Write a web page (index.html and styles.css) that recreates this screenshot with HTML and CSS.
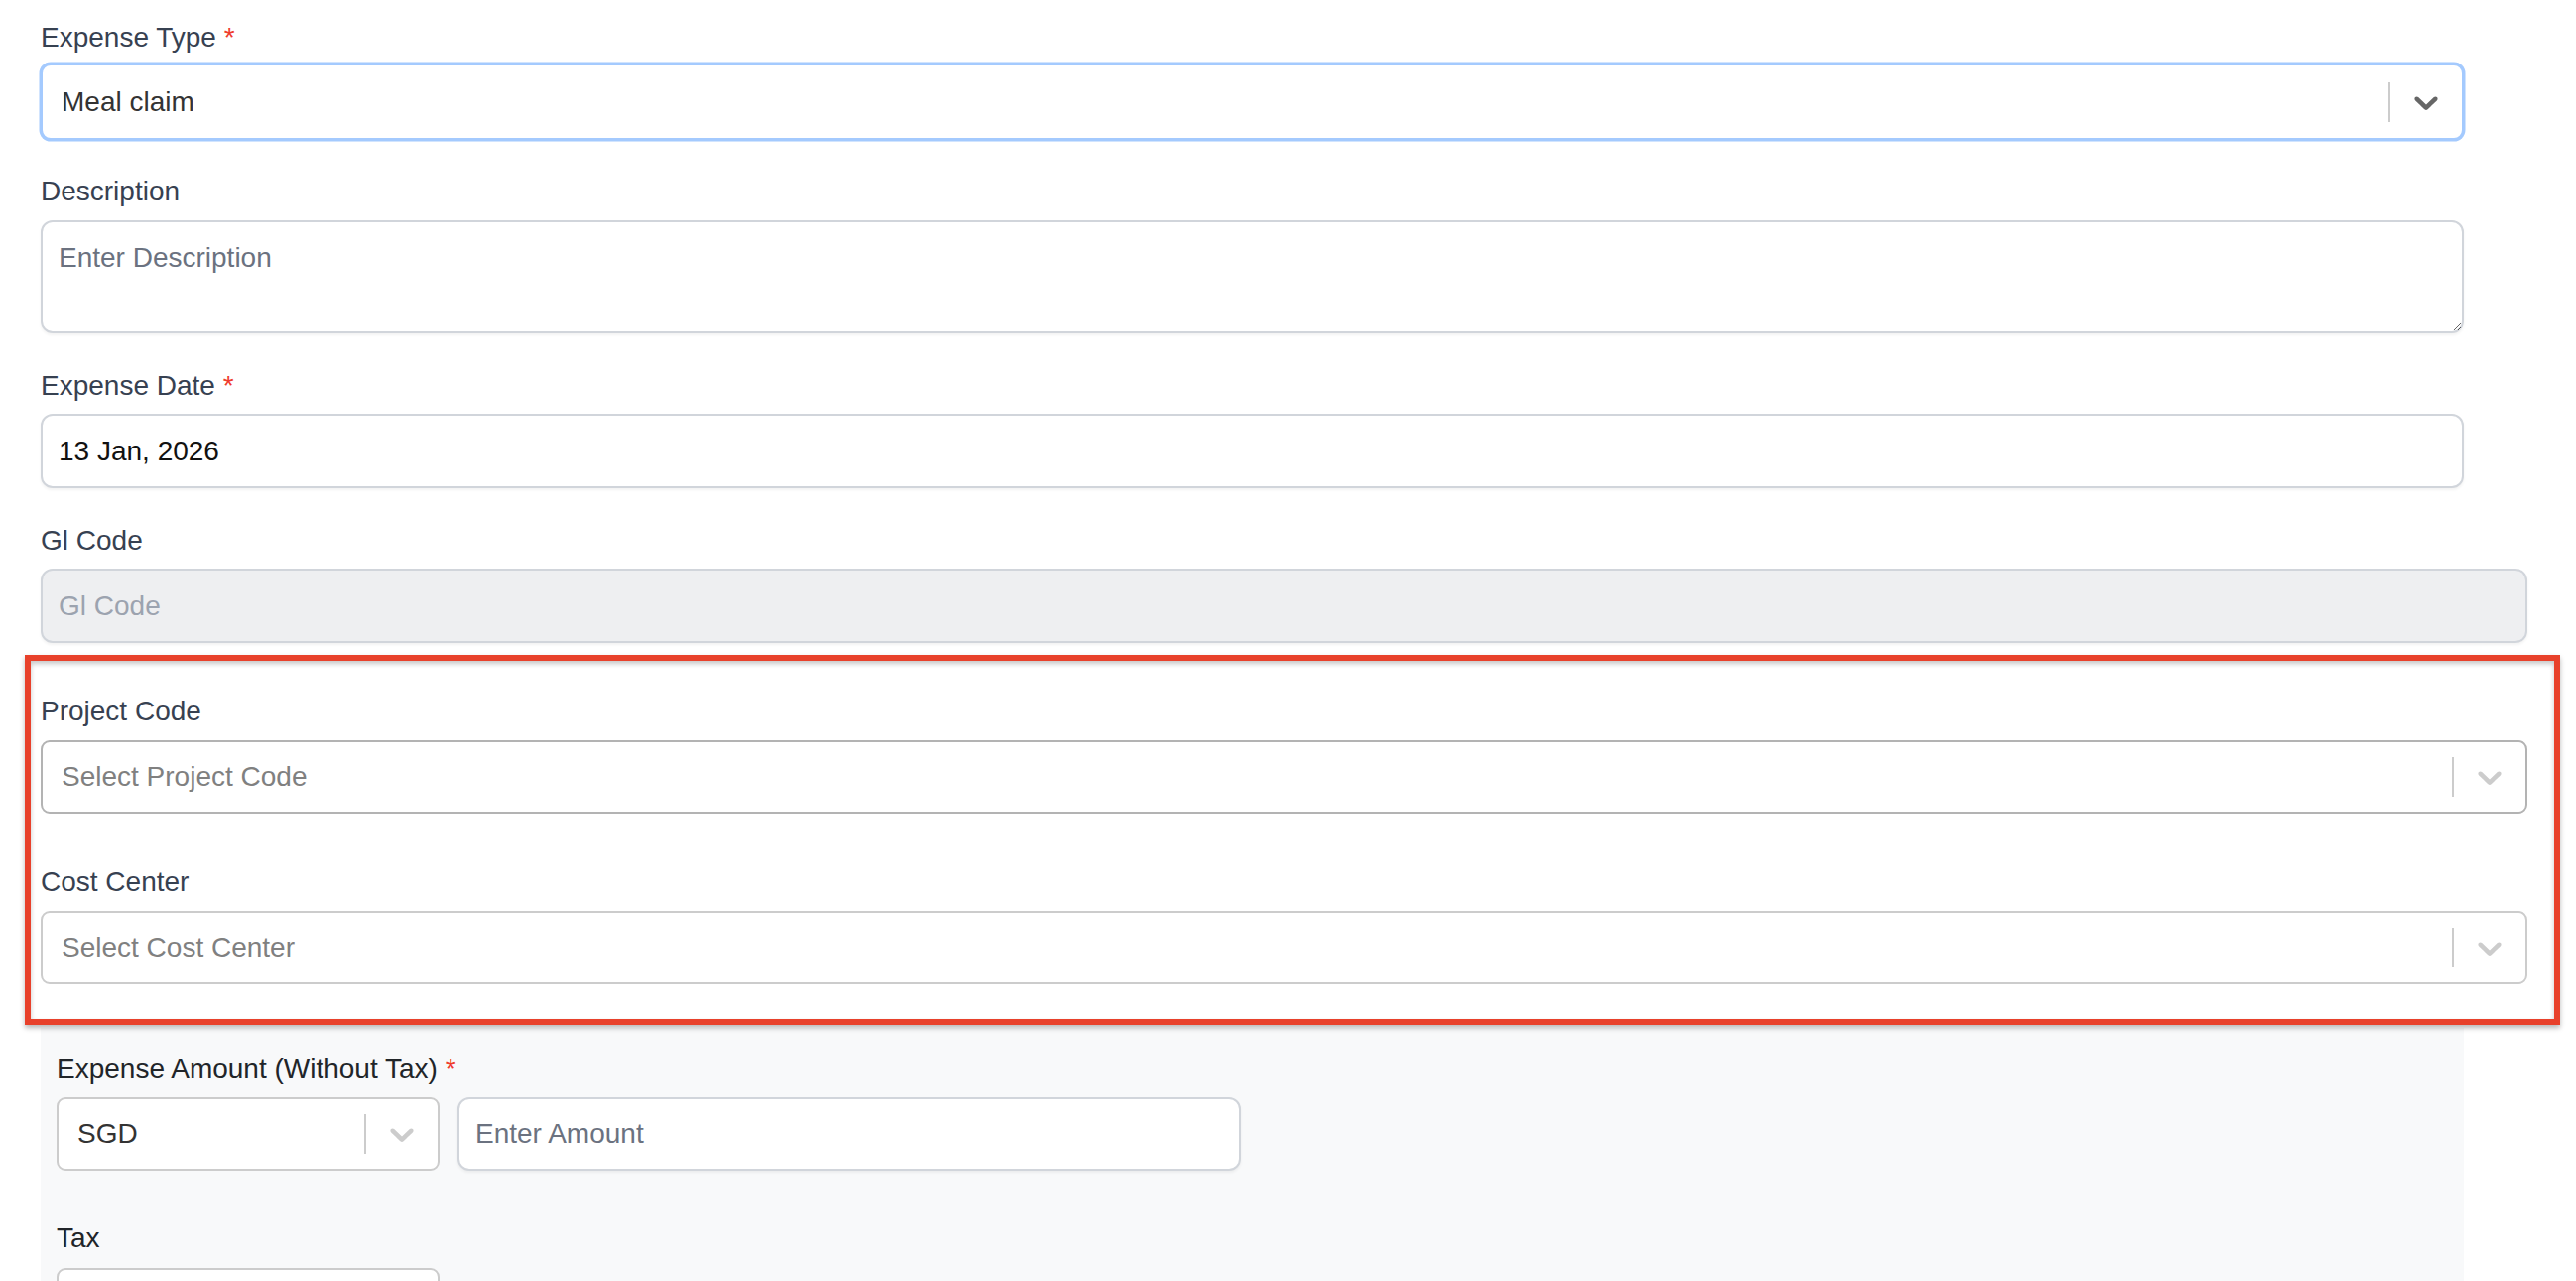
FILE: index.html
```html
<!DOCTYPE html>
<html lang="en">
<head>
<meta charset="utf-8">
<title>Expense form</title>
<link rel="stylesheet" href="styles.css">
</head>
<body>
<div class="page">

  <div class="field field--g1">
    <label class="label label--tight">Expense Type <span class="req">*</span></label>
    <div class="select select--focused w-narrow">
      <div class="select__value select__value--filled">Meal claim</div>
      <span class="select__sep"></span>
      <span class="select__ind select__ind--dark">
        <svg viewBox="0 0 20 20" width="40" height="40" aria-hidden="true"><path d="M4.516 7.548c0.436-0.446 1.043-0.481 1.576 0l3.908 3.747 3.908-3.747c0.533-0.481 1.141-0.446 1.574 0 0.436 0.445 0.408 1.197 0 1.615-0.406 0.418-4.695 4.502-4.695 4.502-0.217 0.223-0.502 0.335-0.787 0.335s-0.57-0.112-0.789-0.335c0 0-4.287-4.084-4.695-4.502s-0.436-1.17 0-1.615z"/></svg>
      </span>
    </div>
  </div>

  <div class="field field--g2">
    <label class="label label--m9">Description</label>
    <textarea class="textarea w-narrow" placeholder="Enter Description"></textarea>
  </div>

  <div class="field field--g3">
    <label class="label label--m8">Expense Date <span class="req">*</span></label>
    <input class="input w-narrow" type="text" value="13 Jan, 2026">
  </div>

  <div class="field field--g4">
    <label class="label label--m8">Gl Code</label>
    <input class="input input--disabled w-wide" type="text" placeholder="Gl Code" disabled>
  </div>

  <div class="highlight w-wide">
    <div class="field field--g5">
      <label class="label label--m9">Project Code</label>
      <div class="select select--hover w-wide">
        <div class="select__value">Select Project Code</div>
        <span class="select__sep"></span>
        <span class="select__ind">
          <svg viewBox="0 0 20 20" width="40" height="40" aria-hidden="true"><path d="M4.516 7.548c0.436-0.446 1.043-0.481 1.576 0l3.908 3.747 3.908-3.747c0.533-0.481 1.141-0.446 1.574 0 0.436 0.445 0.408 1.197 0 1.615-0.406 0.418-4.695 4.502-4.695 4.502-0.217 0.223-0.502 0.335-0.787 0.335s-0.57-0.112-0.789-0.335c0 0-4.287-4.084-4.695-4.502s-0.436-1.17 0-1.615z"/></svg>
        </span>
      </div>
    </div>

    <div class="field">
      <label class="label label--m9">Cost Center</label>
      <div class="select w-wide">
        <div class="select__value">Select Cost Center</div>
        <span class="select__sep"></span>
        <span class="select__ind">
          <svg viewBox="0 0 20 20" width="40" height="40" aria-hidden="true"><path d="M4.516 7.548c0.436-0.446 1.043-0.481 1.576 0l3.908 3.747 3.908-3.747c0.533-0.481 1.141-0.446 1.574 0 0.436 0.445 0.408 1.197 0 1.615-0.406 0.418-4.695 4.502-4.695 4.502-0.217 0.223-0.502 0.335-0.787 0.335s-0.57-0.112-0.789-0.335c0 0-4.287-4.084-4.695-4.502s-0.436-1.17 0-1.615z"/></svg>
        </span>
      </div>
    </div>
  </div>

  <div class="panel w-narrow">
    <div class="field field--g7">
      <label class="label label--dark label--m9">Expense Amount (Without Tax) <span class="req">*</span></label>
      <div class="amount-row">
        <div class="select select--small">
          <div class="select__value select__value--filled">SGD</div>
          <span class="select__sep"></span>
          <span class="select__ind">
            <svg viewBox="0 0 20 20" width="40" height="40" aria-hidden="true"><path d="M4.516 7.548c0.436-0.446 1.043-0.481 1.576 0l3.908 3.747 3.908-3.747c0.533-0.481 1.141-0.446 1.574 0 0.436 0.445 0.408 1.197 0 1.615-0.406 0.418-4.695 4.502-4.695 4.502-0.217 0.223-0.502 0.335-0.787 0.335s-0.57-0.112-0.789-0.335c0 0-4.287-4.084-4.695-4.502s-0.436-1.17 0-1.615z"/></svg>
          </span>
        </div>
        <input class="input input--amount" type="text" placeholder="Enter Amount">
      </div>
    </div>

    <div class="field">
      <label class="label label--dark label--m10">Tax</label>
      <div class="select select--small">
        <div class="select__value"></div>
        <span class="select__sep"></span>
        <span class="select__ind">
          <svg viewBox="0 0 20 20" width="40" height="40" aria-hidden="true"><path d="M4.516 7.548c0.436-0.446 1.043-0.481 1.576 0l3.908 3.747 3.908-3.747c0.533-0.481 1.141-0.446 1.574 0 0.436 0.445 0.408 1.197 0 1.615-0.406 0.418-4.695 4.502-4.695 4.502-0.217 0.223-0.502 0.335-0.787 0.335s-0.57-0.112-0.789-0.335c0 0-4.287-4.084-4.695-4.502s-0.436-1.17 0-1.615z"/></svg>
        </span>
      </div>
    </div>
  </div>

</div>
</body>
</html>
```

FILE: styles.css
```css
html, body {
  margin: 0;
  padding: 0;
  background: #ffffff;
  overflow: hidden;
}

body {
  font-family: "Liberation Sans", Arial, Helvetica, sans-serif;
  font-size: 28px;
  color: #374151;
}

.page {
  padding: 18px 0 0 41px;
}

.w-narrow { width: 2442px; }
.w-wide { width: 2506px; }

.field { display: block; }
.field--g1 { margin-bottom: 32px; }
.field--g2 { margin-bottom: 33px; }
.field--g3 { margin-bottom: 33px; }
.field--g4 { margin-bottom: 49px; }
.field--g5 { margin-bottom: 49px; }
.field--g7 { margin-bottom: 48px; }

.label {
  display: block;
  line-height: 40px;
  height: 40px;
  color: #374151;
  white-space: nowrap;
}
.label--tight { margin-bottom: 6px; }
.label--m8 { margin-bottom: 8px; }
.label--m9 { margin-bottom: 9px; }
.label--m10 { margin-bottom: 10px; }
.label--dark { color: #212529; }

.req { color: #ef3b2c; }

/* react-select like control */
.select {
  box-sizing: border-box;
  display: flex;
  align-items: center;
  height: 74px;
  background: #ffffff;
  border: 2px solid #cccccc;
  border-radius: 9px;
}
.select--focused {
  height: 77px;
  border-color: #a4cafe;
  box-shadow: 0 0 0 1.5px #a4cafe;
  border-radius: 10px;
}
.select--hover { border-color: #b3b3b3; }
.select--small { width: 386px; }

.select__value {
  flex: 1;
  padding-left: 19px;
  color: #808080;
  white-space: nowrap;
  overflow: hidden;
}
.select__value--filled { color: #333333; }

.select__sep {
  width: 2px;
  height: 40px;
  background: #cccccc;
  flex: none;
}

.select__ind {
  width: 72px;
  height: 40px;
  display: flex;
  align-items: center;
  justify-content: center;
  flex: none;
  fill: #cccccc;
}
.select__ind--dark { fill: #666666; }
.select__ind svg { display: block; }

/* text inputs */
.textarea,
.input {
  box-sizing: border-box;
  display: block;
  font: inherit;
  font-size: 28px;
  margin: 0;
  background: #ffffff;
  border: 2px solid #d1d5db;
  border-radius: 12px;
  box-shadow: 0 2px 3px rgba(0, 0, 0, 0.05);
  outline: none;
}

.textarea {
  height: 114px;
  padding: 16px 16px;
  line-height: 40px;
  color: #111827;
}
.textarea::placeholder { color: #6b7280; opacity: 1; }

.input {
  height: 75px;
  padding: 0 16px;
  color: #111111;
}
.input::placeholder { color: #6b7280; opacity: 1; }

.input--disabled {
  background: #eeeff1;
  color: #9ca3af;
}
.input--disabled::placeholder { color: #9ca3af; opacity: 1; }

.input--amount {
  width: 790px;
  height: 74px;
}

/* annotation rectangle drawn over the two fields */
.highlight {
  position: relative;
}
.highlight::after {
  content: "";
  position: absolute;
  top: -37px;
  bottom: -41px;
  left: -16px;
  right: -33px;
  border: 6px solid #e8412b;
  box-shadow: 0 3px 5px rgba(0, 0, 0, 0.28), inset 0 3px 5px rgba(0, 0, 0, 0.22);
  pointer-events: none;
}

.panel {
  box-sizing: border-box;
  margin-top: 44px;
  padding: 21px 16px 40px;
  background: #f8f9fa;
  min-height: 300px;
}

.amount-row {
  display: flex;
  gap: 18px;
}
```
